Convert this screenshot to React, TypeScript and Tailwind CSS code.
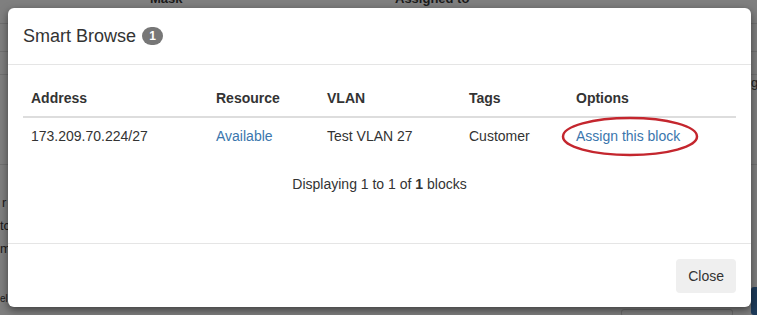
import { FunctionComponent } from "react";

type Row = {
  address: string;
  resource: string;
  vlan: string;
  tags: string;
};

const rows: Row[] = [
  { address: "173.209.70.224/27", resource: "Available", vlan: "Test VLAN 27", tags: "Customer" },
];

// dimmed page behind the modal
const Backdrop: FunctionComponent = () => {
  return (
    <div className="w-[757px] h-[315px] flex flex-col bg-[#7f7f7f] text-[13px] leading-[16px] text-[#1a1a1a] overflow-hidden">
      <div className="h-[24px] flex border-b border-[#707070]">
        <span className="ml-[150px] w-[245px] mt-[-9px] font-bold">Mask *</span>
        <span className="mt-[-9px] font-bold">Assigned to</span>
      </div>
      <div className="h-[28px] border-b border-[#707070]" />
      <div className="h-[23px] border-b border-[#707070]" />
      <div className="h-[45px] flex justify-end">
        <span className="w-[6px] text-[#222]">g</span>
      </div>
      <div className="h-[45px] border-b border-[#707070]" />
      <div className="flex-1 flex justify-between">
        <div className="flex flex-col pt-[30px] gap-[7px] leading-[16px]">
          <span className="pl-[2px]">r</span>
          <span>tc</span>
          <span>m</span>
          <span className="mt-[30px] text-[10px] leading-[10px]">el</span>
        </div>
        <div className="flex items-end pb-[10px] gap-[18px]">
          <div className="w-[112px] h-[8px] mb-[-12px] rounded-[3px] border border-[#6a6a6a]" />
          <div className="w-[6px] h-[28px] mb-[-10px] rounded-l-[3px] bg-[#1d3b5a]" />
        </div>
      </div>
    </div>
  );
};

const App: FunctionComponent = () => {
  return (
    <div className="relative w-[757px] h-[315px] overflow-hidden font-['Liberation_Sans',Arial,sans-serif] text-[14px] leading-[20px] text-[#333]">
      <Backdrop />
      <div className="absolute left-[8px] top-[8px] w-[743px] h-[299px] flex flex-col bg-white rounded-[6px] shadow-[0_3px_9px_rgba(0,0,0,0.5)]">
        <div className="h-[57px] px-[15px] flex items-center border-b border-[#e5e5e5]">
          <h4 className="text-[18px] leading-[26px] text-[#333] flex items-center">
            Smart Browse
            <span className="ml-[6px] inline-flex items-center justify-center h-[18px] min-w-[21px] px-[7px] rounded-[10px] bg-[#777] text-white text-[12px] font-bold leading-none">
              1
            </span>
          </h4>
        </div>
        <div className="flex-1 px-[15px] pt-[15px] border-b border-[#e5e5e5]">
          <table className="w-[713px] border-collapse text-left">
            <thead>
              <tr className="border-b-2 border-[#ddd]">
                <th className="w-[185px] px-[8px] py-[8px] font-bold">Address</th>
                <th className="w-[111px] px-[8px] py-[8px] font-bold">Resource</th>
                <th className="w-[142px] px-[8px] py-[8px] font-bold">VLAN</th>
                <th className="w-[107px] px-[8px] py-[8px] font-bold">Tags</th>
                <th className="px-[8px] py-[8px] font-bold">Options</th>
              </tr>
            </thead>
            <tbody>
              {rows.map((r) => (
                <tr key={r.address}>
                  <td className="px-[8px] py-[8px]">{r.address}</td>
                  <td className="px-[8px] py-[8px]">
                    <a className="text-[#3a76ad]">{r.resource}</a>
                  </td>
                  <td className="px-[8px] py-[8px]">{r.vlan}</td>
                  <td className="px-[8px] py-[8px]">{r.tags}</td>
                  <td className="px-[8px] py-[8px]">
                    <span className="relative inline-block">
                      <a className="text-[#3a76ad]">Assign this block</a>
                      <svg
                        className="absolute left-[-15px] top-[-10px] pointer-events-none"
                        width="138"
                        height="41"
                        viewBox="0 0 138 41"
                      >
                        <ellipse cx="69" cy="20.5" rx="67" ry="18.5" fill="none" stroke="#c4262e" strokeWidth="2.5" />
                      </svg>
                    </span>
                  </td>
                </tr>
              ))}
            </tbody>
          </table>
          <p className="mt-[20px] text-center">
            Displaying 1 to 1 of <b>1</b> blocks
          </p>
        </div>
        <div className="h-[63px] px-[15px] flex items-center justify-end">
          <button className="h-[34px] px-[12px] rounded-[4px] bg-[#efefef] text-[#333] text-[14px]">
            Close
          </button>
        </div>
      </div>
    </div>
  );
};

export default App;
